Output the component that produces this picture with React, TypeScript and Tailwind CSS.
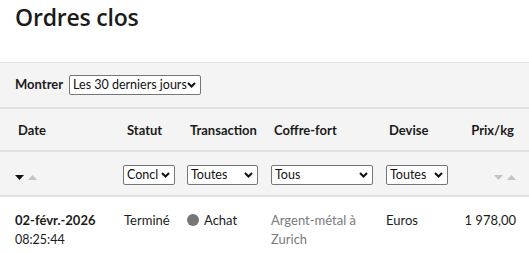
import React from 'react';

const Chevron = () => (
    <svg width="9" height="6" viewBox="0 0 9 6" className="shrink-0">
        <path d="M1 1 L4.5 4.5 L8 1" fill="none" stroke="#111" strokeWidth="2" />
    </svg>
);

const Select = ({ label, w }: { label: string; w: string }) => (
    <div className={`${w} h-[20px] flex items-center justify-between border border-[#767676] rounded-[2px] bg-white pl-[3px] pr-[4px] text-[12.5px] text-[#111] overflow-hidden`}>
        <span className="whitespace-nowrap overflow-hidden">{label}</span>
        <Chevron />
    </div>
);

const SortArrows = ({ active }: { active: boolean }) => (
    <div className="flex items-center gap-[4px]">
        <svg width="9" height="5" viewBox="0 0 9 5">
            <path d="M0 0 H9 L4.5 5 Z" fill={active ? '#111' : '#c4c4c4'} />
        </svg>
        <svg width="9" height="5" viewBox="0 0 9 5">
            <path d="M0 5 H9 L4.5 0 Z" fill="#c4c4c4" />
        </svg>
    </div>
);

const cols = 'grid grid-cols-[108px_64px_84px_115px_70px_1fr] px-[15px]';

export default function App() {
    return (
        <div className="w-[529px] h-[253px] bg-white overflow-hidden text-[#1b1b1b] font-['Lato',sans-serif]">
            {/* Title */}
            <div className="h-[62px] px-[15px] pt-[1px]">
                <h1 className="text-[23px] leading-[32px] font-semibold font-['Open_Sans',sans-serif] tracking-[-0.2px]">Ordres clos</h1>
            </div>

            {/* Period filter */}
            <div className="h-[47px] bg-[#f4f4f4] border-t border-b-2 border-[#e1e0e7] flex items-center gap-[6px] px-[15px]">
                <span className="text-[13px] font-bold">Montrer</span>
                <Select label="Les 30 derniers jours" w="w-[132px]" />
            </div>

            {/* Header row */}
            <div className={`${cols} h-[43px] bg-[#f4f4f4] items-center text-[13px] font-bold border-b-2 border-[#e1e0e7] pt-[2px]`}>
                <span className="pl-[3px]">Date</span>
                <span className="pl-[4px]">Statut</span>
                <span className="pl-[3px]">Transaction</span>
                <span className="pl-[3px]">Coffre-fort</span>
                <span className="pl-[3px]">Devise</span>
                <span className="text-right">Prix/kg</span>
            </div>

            {/* Filter row */}
            <div className={`${cols} h-[45px] bg-[#f4f4f4] items-center border-b-2 border-[#e1e0e7] pt-[3px]`}>
                <div className="pt-[5px]"><SortArrows active /></div>
                <Select label="Concl" w="w-[52px]" />
                <Select label="Toutes" w="w-[71px]" />
                <Select label="Tous" w="w-[102px]" />
                <Select label="Toutes" w="w-[62px]" />
                <div className="flex justify-end pt-[5px] mr-[-2px]"><SortArrows active={false} /></div>
            </div>

            {/* Data row */}
            <div className={`${cols} pt-[14px] text-[13px] leading-[19px]`}>
                <div>
                    <div className="font-bold">02-févr.-2026</div>
                    <div className="text-[12.5px]">08:25:44</div>
                </div>
                <span className="pl-[1px]">Terminé</span>
                <span className="flex items-start gap-[5px]">
                    <span className="w-[12px] h-[12px] rounded-full bg-[#777] mt-[3px]" />
                    Achat
                </span>
                <span className="text-[#7a7a7a]">Argent-métal à Zurich</span>
                <span>Euros</span>
                <span className="text-right mr-[-2px] whitespace-nowrap">1{'\u202f'}978,00</span>
            </div>
        </div>
    );
}
